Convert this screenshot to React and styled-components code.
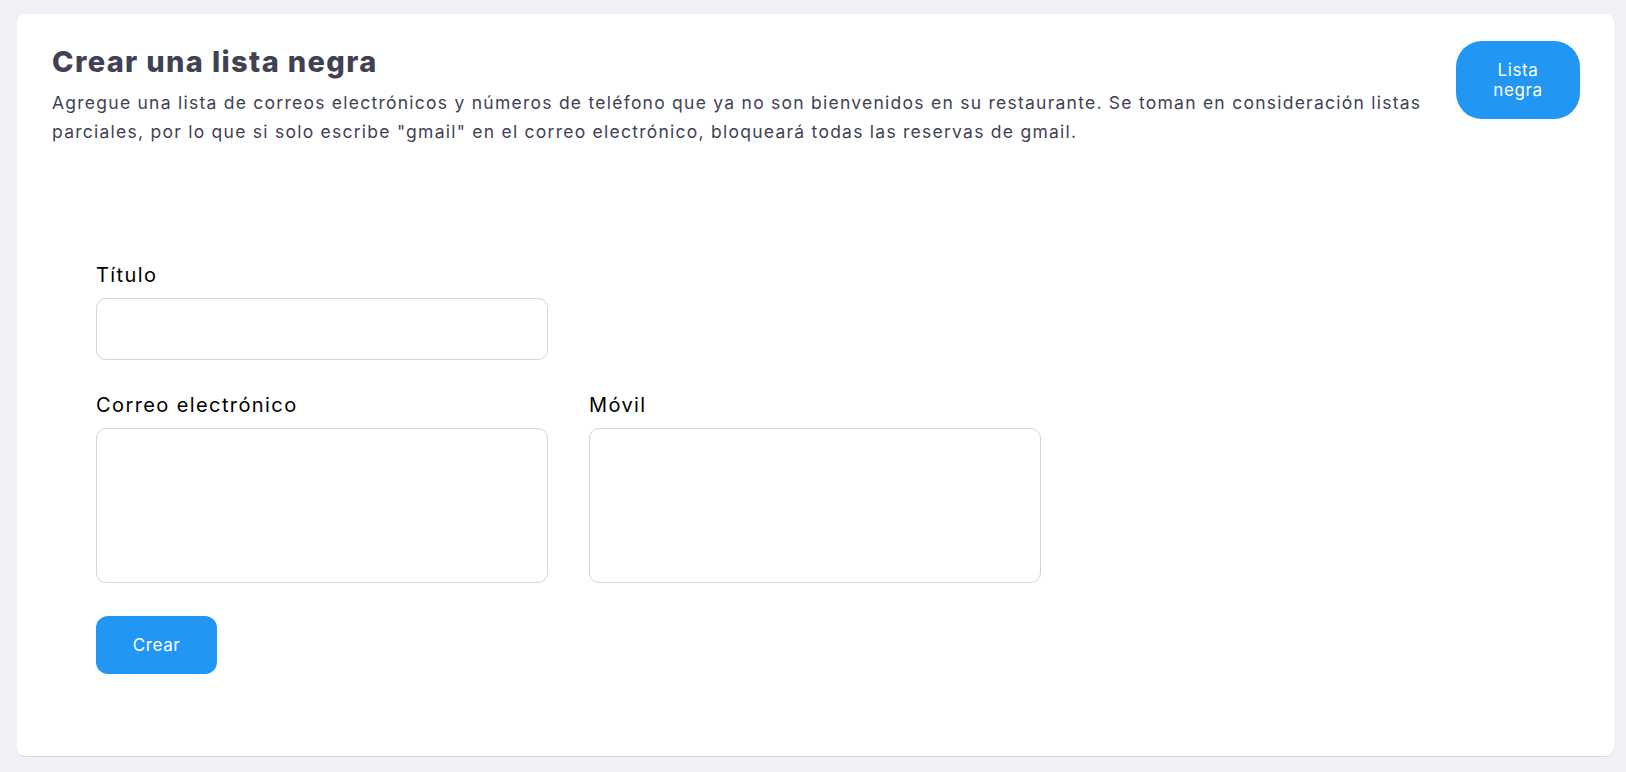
import React from "react";
import styled, { createGlobalStyle } from "styled-components";

const GlobalStyle = createGlobalStyle`
  html, body {
    margin: 0;
    padding: 0;
    background: #f0f1f7;
    font-family: Inter, "Open Sans", sans-serif;
  }
  * { box-sizing: border-box; }
`;

const Page = styled.div`
  padding: 14px 12px 15px 17px;
`;

const Card = styled.section`
  background: #ffffff;
  border-radius: 8px;
  box-shadow: 0 1px 0 #d9dae3;
  padding: 27px 34px 82px 35px;
`;

const Header = styled.header`
  display: flex;
  justify-content: space-between;
  align-items: flex-start;
  gap: 24px;
`;

const TitleBlock = styled.div`
  margin-top: 3px;
  max-width: 1395px;
`;

const Heading = styled.h1`
  margin: 0;
  font-size: 29px;
  line-height: 36px;
  font-weight: 800;
  letter-spacing: 1.35px;
  color: #3f4254;
`;

const Description = styled.p`
  margin: 8px 0 0;
  font-size: 17.5px;
  line-height: 29px;
  letter-spacing: 1.25px;
  color: #3f4254;
`;

const PrimaryButton = styled.button`
  flex-shrink: 0;
  width: ${(p) => p.$width}px;
  height: ${(p) => p.$height}px;
  padding: 0 ${(p) => p.$padX}px;
  border: none;
  border-radius: ${(p) => p.$radius}px;
  background: #2196f3;
  color: #ffffff;
  font-family: Inter, "Open Sans", sans-serif;
  font-size: 17px;
  line-height: 20px;
  letter-spacing: 0.6px;
  text-align: center;
  cursor: pointer;
`;

const Form = styled.form`
  margin: 115px 0 0 44px;
  display: grid;
  grid-template-columns: 452px 452px;
  column-gap: 41px;
  row-gap: 31px;
`;

const Field = styled.div`
  display: flex;
  flex-direction: column;
  gap: 9px;
`;

const Label = styled.label`
  font-size: 20px;
  line-height: 28px;
  letter-spacing: 1.4px;
  color: #000000;
`;

const TextInput = styled.input`
  height: 62px;
  border: 1px solid #d3d5dc;
  border-radius: 10px;
  padding: 0 14px;
  font: inherit;
  outline: none;
`;

const TextArea = styled.textarea`
  height: 155px;
  border: 1px solid #d3d5dc;
  border-radius: 10px;
  padding: 12px 14px;
  font: inherit;
  resize: none;
  outline: none;
`;

const Actions = styled.div`
  grid-column: 1 / -1;
  margin-top: 2px;
`;

export default function App() {
  return (
    <>
      <GlobalStyle />
      <Page>
        <Card>
          <Header>
            <TitleBlock>
              <Heading>Crear una lista negra</Heading>
              <Description>
                Agregue una lista de correos electrónicos y números de teléfono que ya no son
                bienvenidos en su restaurante. Se toman en consideración listas parciales, por lo
                que si solo escribe "gmail" en el correo electrónico, bloqueará todas las reservas
                de gmail.
              </Description>
            </TitleBlock>
            <PrimaryButton type="button" $width={124} $height={78} $padX={30} $radius={26}>
              Lista negra
            </PrimaryButton>
          </Header>
          <Form onSubmit={(e) => e.preventDefault()}>
            <Field>
              <Label htmlFor="titulo">Título</Label>
              <TextInput id="titulo" type="text" />
            </Field>
            <div />
            <Field>
              <Label htmlFor="correo">Correo electrónico</Label>
              <TextArea id="correo" />
            </Field>
            <Field>
              <Label htmlFor="movil">Móvil</Label>
              <TextArea id="movil" />
            </Field>
            <Actions>
              <PrimaryButton type="submit" $width={121} $height={58} $padX={10} $radius={12}>
                Crear
              </PrimaryButton>
            </Actions>
          </Form>
        </Card>
      </Page>
    </>
  );
}
